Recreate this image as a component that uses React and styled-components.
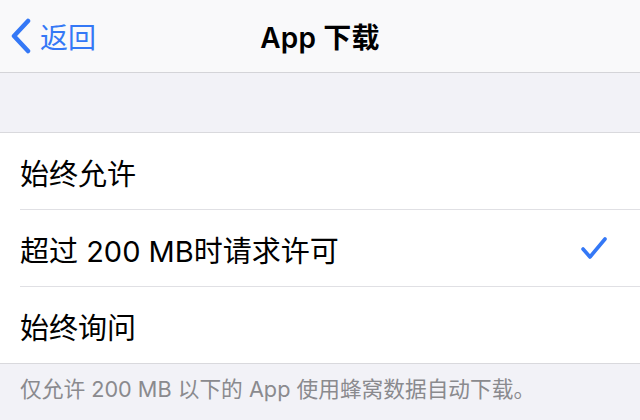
import React from 'react';
import styled, { createGlobalStyle } from 'styled-components';

const GlobalStyle = createGlobalStyle`
  html, body {
    margin: 0;
    padding: 0;
    background: #f2f2f7;
  }
  body {
    font-family: Inter, "Noto Sans CJK SC", sans-serif;
  }
`;

const Page = styled.div`
  width: 640px;
  height: 420px;
  overflow: hidden;
  background: #f2f2f7;
`;

const NavBar = styled.div`
  height: 72px;
  background: #f9f9fa;
  border-bottom: 1px solid #d4d4d8;
  display: grid;
  grid-template-columns: 1fr auto 1fr;
  align-items: center;
`;

const BackButton = styled.div`
  display: flex;
  align-items: center;
  gap: 8px;
  padding-left: 10px;
  color: #3478f6;
  font-size: 28px;
`;

const Title = styled.div`
  font-size: 28px;
  font-weight: 600;
  color: #000;
  letter-spacing: 0.2px;
`;

const Spacer = styled.div`
  height: 59px;
`;

const Group = styled.div`
  background: #fff;
  border-top: 1px solid #d9d9dd;
  border-bottom: 1px solid #d9d9dd;
`;

const Row = styled.div`
  height: 76px;
  margin-left: 20px;
  padding-right: 32px;
  display: flex;
  align-items: center;
  justify-content: space-between;
  border-bottom: ${(p) => (p.$last ? 'none' : '1px solid #e0e0e4')};
`;

const Label = styled.span`
  font-size: 29px;
  color: #000;
  padding-top: 2px;
`;

const Footer = styled.div`
  padding: 8px 20px 0;
  font-size: 21.7px;
  color: #8a8a8e;
`;

const Chevron = () => (
  <svg width="22" height="36" viewBox="0 0 22 36">
    <path d="M18 3 L4 18 L18 33" fill="none" stroke="#3478f6" strokeWidth="4.5" strokeLinecap="round" strokeLinejoin="round" />
  </svg>
);

const Check = () => (
  <svg width="28" height="26" viewBox="0 0 28 26">
    <path d="M3 14 L10 22 L25 4" fill="none" stroke="#3478f6" strokeWidth="3.6" strokeLinecap="round" strokeLinejoin="round" />
  </svg>
);

const options = [
  { label: '始终允许' },
  { label: '超过 200 MB时请求许可', checked: true },
  { label: '始终询问' },
];

export default function App() {
  return (
    <Page>
      <GlobalStyle />
      <NavBar>
        <BackButton>
          <Chevron />
          <span>返回</span>
        </BackButton>
        <Title>App 下载</Title>
        <div />
      </NavBar>
      <Spacer />
      <Group>
        {options.map((o, i) => (
          <Row key={o.label} $last={i === options.length - 1}>
            <Label>{o.label}</Label>
            {o.checked && <Check />}
          </Row>
        ))}
      </Group>
      <Footer>仅允许 200 MB 以下的 App 使用蜂窝数据自动下载。</Footer>
    </Page>
  );
}
